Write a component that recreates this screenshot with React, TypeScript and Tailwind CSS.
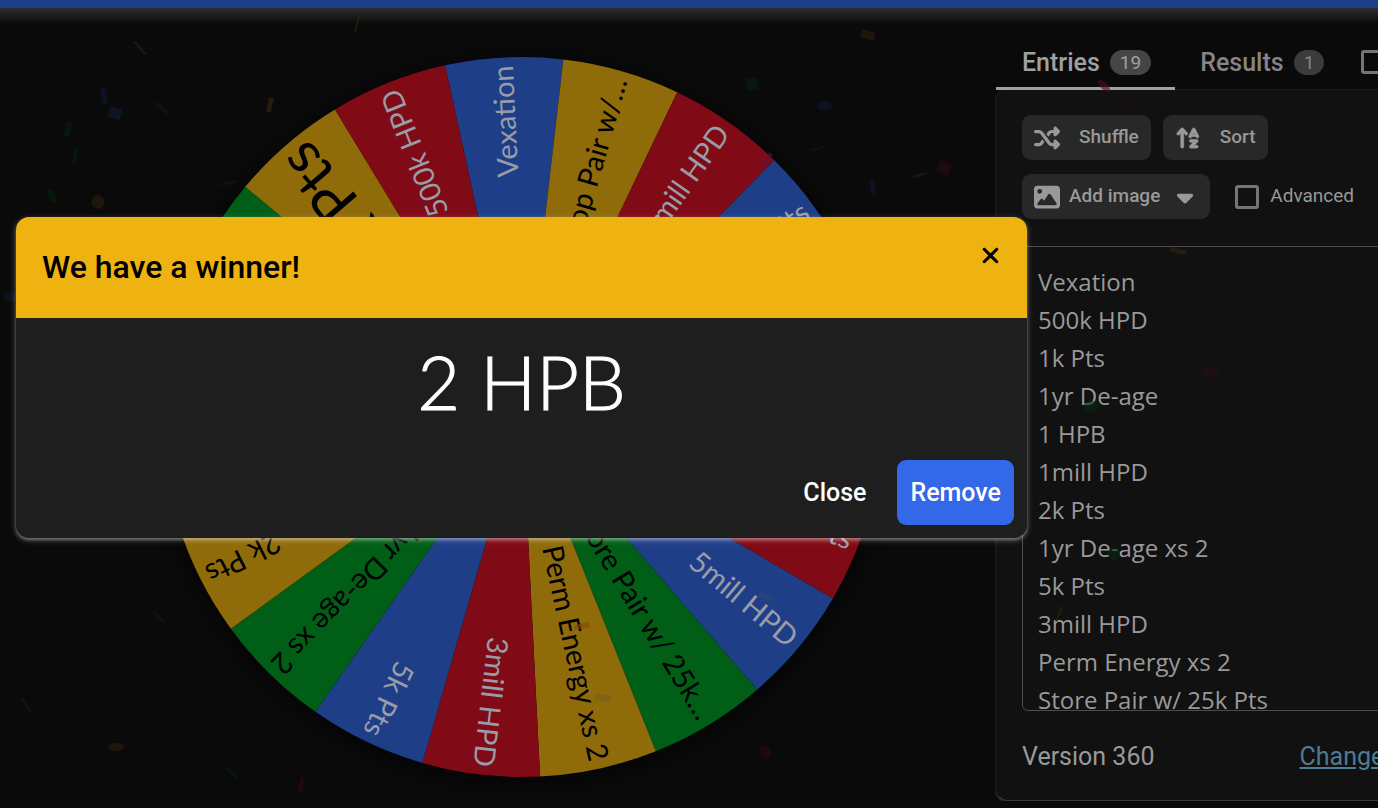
import { FaArrowUpAZ, FaCaretDown, FaImage, FaShuffle, FaXmark } from "react-icons/fa6";

const BLUE = "#1f3e88";
const RED = "#800a15";
const GOLD = "#8f6b0a";
const GREEN = "#005e16";

const slices = [
  { label: "Vexation", color: BLUE },
  { label: "Shop Pair w/…", color: GOLD },
  { label: "10mill HPD", color: RED },
  { label: "10k Pts", color: BLUE },
  { label: "", color: GREEN },
  { label: "", color: GOLD },
  { label: "7k Pts", color: RED },
  { label: "5mill HPD", color: BLUE },
  { label: "Store Pair w/ 25k…", color: GREEN },
  { label: "Perm Energy xs 2", color: GOLD },
  { label: "3mill HPD", color: RED },
  { label: "5k Pts", color: BLUE },
  { label: "1yr De-age xs 2", color: GREEN },
  { label: "2k Pts", color: GOLD },
  { label: "", color: RED },
  { label: "", color: BLUE },
  { label: "", color: GREEN },
  { label: "1k Pts", color: GOLD, size: 59 },
  { label: "500k HPD", color: RED },
];

const entries = [
  "Vexation",
  "500k HPD",
  "1k Pts",
  "1yr De-age",
  "1 HPB",
  "1mill HPD",
  "2k Pts",
  "1yr De-age xs 2",
  "5k Pts",
  "3mill HPD",
  "Perm Energy xs 2",
  "Store Pair w/ 25k Pts",
];

const STEP = 360 / slices.length;
const START = -12.35;
const R = 360;

const point = (deg: number) => {
  const a = (deg * Math.PI) / 180;
  return `${R * Math.sin(a)} ${-R * Math.cos(a)}`;
};

const Wheel = () => (
  <svg viewBox="-370 -370 740 740" className="w-[740px] shrink-0 overflow-visible" role="img" aria-label="Wheel">
    <circle r="364" cy="4" fill="#000" opacity="0.5" className="blur-sm" />
    {slices.map((slice, i) => {
      const from = START + i * STEP;
      return (
        <path
          key={i}
          d={`M0 0 L${point(from)} A${R} ${R} 0 0 1 ${point(from + STEP)} Z`}
          fill={slice.color}
        />
      );
    })}
    {slices.map((slice, i) => (
      <text
        key={i}
        x="352"
        y="-3"
        dominantBaseline="central"
        textAnchor="end"
        fontSize={slice.size ?? 29}
        fill={slice.color === BLUE || slice.color === RED ? "#999ca6" : "#000"}
        transform={`rotate(${START + (i + 0.5) * STEP - 90})`}
        className="font-['Lato',sans-serif]"
      >
        {slice.label}
      </text>
    ))}
  </svg>
);

// x, y, width, height, rotation, colour, round
const confetti: [number, number, number, number, number, string, boolean?][] = [
  [140, 48, 2, 16, -40, "#33280a"],
  [357, 24, 2, 17, 14, "#33280a"],
  [104, 96, 6, 16, -5, "#0d1830"],
  [115, 113, 13, 11, 15, "#0f1a33"],
  [162, 108, 4, 17, -48, "#0d1428"],
  [270, 105, 5, 15, 14, "#33280a"],
  [68, 129, 6, 14, 12, "#06200c"],
  [75, 156, 4, 15, 10, "#06200c"],
  [52, 196, 8, 16, -30, "#06200c", true],
  [98, 202, 13, 14, -30, "#2a200a", true],
  [229, 183, 18, 3, -14, "#06200c", true],
  [10, 297, 11, 9, 0, "#10182e"],
  [868, 35, 14, 8, 18, "#2a200a"],
  [752, 84, 12, 12, -10, "#06200c"],
  [825, 106, 16, 9, 0, "#0f1830", true],
  [817, 149, 17, 3, -14, "#06200c", true],
  [767, 160, 5, 15, 30, "#5a1440"],
  [873, 188, 5, 15, -12, "#0d1830"],
  [920, 175, 17, 3, -16, "#2a200a", true],
  [944, 168, 12, 12, 22, "#2c080b"],
  [1104, 86, 7, 16, -45, "#4a1015", true],
  [1127, 106, 2, 17, 16, "#2c080b"],
  [1178, 251, 16, 5, 12, "#2e260c"],
  [1211, 372, 15, 7, 8, "#2c0d10"],
  [1091, 406, 15, 11, 0, "#0a2811", true],
  [1114, 554, 12, 12, 0, "#0a2811", true],
  [1059, 614, 2, 16, 20, "#33280a"],
  [159, 617, 3, 17, -42, "#06200c", true],
  [26, 705, 2, 17, -36, "#201a0a"],
  [116, 747, 17, 8, -4, "#2a200a", true],
  [232, 773, 3, 17, -46, "#06200c", true],
  [301, 785, 5, 18, 10, "#2c080b", true],
  [765, 752, 11, 15, -35, "#2c080b", true],
  [766, 597, 15, 6, 16, "#33456f"],
  [582, 626, 15, 5, -12, "#8a4508"],
  [603, 698, 16, 6, 8, "#746022"],
  [688, 658, 17, 3, -8, "#1b5a12", true],
];

const Confetti = () => (
  <svg className="pointer-events-none absolute inset-0 z-20 h-full w-full" aria-hidden="true">
    {confetti.map(([x, y, w, h, deg, fill, round], i) => (
      <rect
        key={i}
        x={-w / 2}
        y={-h / 2}
        width={w}
        height={h}
        rx={round ? w / 2 : 0}
        ry={round ? h / 2 : 0}
        fill={fill}
        opacity="0.6"
        transform={`translate(${x} ${y}) rotate(${deg})`}
      />
    ))}
  </svg>
);

const WinnerDialog = () => (
  <div className="absolute inset-0 z-30 pt-[217px] pl-4">
    <div
      role="dialog"
      aria-labelledby="winner-title"
      className="w-full max-w-[1011px] overflow-hidden rounded-[13px] bg-[#1e1e1e] shadow-[0_2px_6px_rgba(255,255,255,0.3),0_2px_3px_rgba(255,255,255,0.25)]"
    >
      <div className="flex h-[101px] items-start justify-between bg-[#eeb211] px-[26px] text-black">
        <h2 id="winner-title" className="pt-[26px] text-[32px] leading-[48px] font-medium">
          We have a winner!
        </h2>
        <button type="button" aria-label="Dismiss" className="pt-[26px]">
          <FaXmark size={25} className="-mr-0.5" />
        </button>
      </div>
      <p className="pt-4 text-center font-['Lato',sans-serif] text-[74px] leading-[96px] font-light text-white [-webkit-text-stroke:1px_white]">
        2 HPB
      </p>
      <div className="flex justify-end gap-[18px] px-[13px] pt-[30px] pb-[13px] text-[25px] font-medium text-white">
        <button type="button" className="h-[65px] rounded-[9px] px-[13px]">
          Close
        </button>
        <button type="button" className="h-[65px] rounded-[9px] bg-[#3369e8] px-[13px]">
          Remove
        </button>
      </div>
    </div>
  </div>
);

const toolButton =
  "flex h-[45px] items-center rounded-[9px] bg-[#282828] px-3 text-[19px] font-medium text-[#999]";
const checkbox = "size-6 shrink-0 appearance-none rounded-[3px] border-3 border-[#757575]";

const Sidebar = () => (
  <aside className="flex w-[383px] shrink-0 flex-col overflow-hidden pt-7">
    <div role="tablist" className="relative z-10 flex h-[54px] shrink-0 items-stretch text-[25px] font-medium">
      <button
        type="button"
        role="tab"
        aria-selected="true"
        className="mr-[25px] ml-px flex shrink-0 items-center gap-[10px] border-b-3 border-[#a0a0a0] pt-0.5 pr-6 pl-[26px] text-[#a0a0a0]"
      >
        Entries
        <span className="rounded-full bg-[#454545] px-[10px] text-[19px] leading-[25px] font-normal">19</span>
      </button>
      <button
        type="button"
        role="tab"
        aria-selected="false"
        className="flex shrink-0 items-center gap-[10px] border-b-3 border-transparent pt-0.5 text-[#858585]"
      >
        Results
        <span className="rounded-full bg-[#3b3b3b] px-[10px] text-[19px] leading-[25px] font-normal">1</span>
      </button>
      <label className="ml-[37px] flex items-center border-b-3 border-transparent">
        <input type="checkbox" aria-label="Hide" className={checkbox} />
      </label>
    </div>

    <div className="-mt-px mr-[-20px] flex flex-col rounded-[13px] border border-[#1c1c1c] border-b-[#3a3a3a] bg-[#111] pt-[25px] pl-[26px] shadow-[0_1px_2px_rgba(255,255,255,0.2)]">
      <div className="flex gap-3">
        <button type="button" className={toolButton}>
          <FaShuffle size={26} className="mr-[19px]" />
          Shuffle
        </button>
        <button type="button" className={toolButton}>
          <FaArrowUpAZ size={26} strokeWidth={16} className="mr-[19px]" />
          Sort
        </button>
      </div>
      <div className="mt-[14px] flex items-center">
        <button type="button" className={toolButton}>
          <FaImage size={26} className="mr-[9px]" />
          Add image
          <FaCaretDown size={26} className="ml-3" />
        </button>
        <label className="ml-[25px] flex items-center gap-[11px] text-[19px] text-[#999]">
          <input type="checkbox" className={checkbox} />
          Advanced
        </label>
      </div>

      <textarea
        aria-label="Entries"
        defaultValue={entries.join("\n")}
        className="mt-[27px] h-[465px] w-full resize-none overflow-hidden rounded-[6px] border border-[#4c4c4c] bg-transparent px-[15px] pt-4 font-['Open_Sans',sans-serif] text-[24px] leading-[38px] text-[#999] outline-none"
      />

      <div className="flex gap-[145px] pt-[27px] pb-[24px] text-[25px] leading-[38px] whitespace-nowrap text-[#999]">
        <span>Version 360</span>
        <a href="#changelog" className="text-[#4d7a96] underline">
          Changelog
        </a>
      </div>
    </div>
  </aside>
);

const App = () => (
  <div className="relative min-h-screen overflow-hidden bg-[#0a0a0a] font-['Roboto',sans-serif]">
    <header className="h-2 bg-[#1f3e88]" />
    <div className="h-4 bg-linear-to-b from-[#2e2e2e] to-[#0a0a0a]" />
    <main className="-mt-4 flex">
      <section className="flex min-w-0 flex-1 items-start justify-center pt-[39px] pl-12">
        <Wheel />
      </section>
      <Sidebar />
    </main>
    <Confetti />
    <WinnerDialog />
  </div>
);

export default App;
